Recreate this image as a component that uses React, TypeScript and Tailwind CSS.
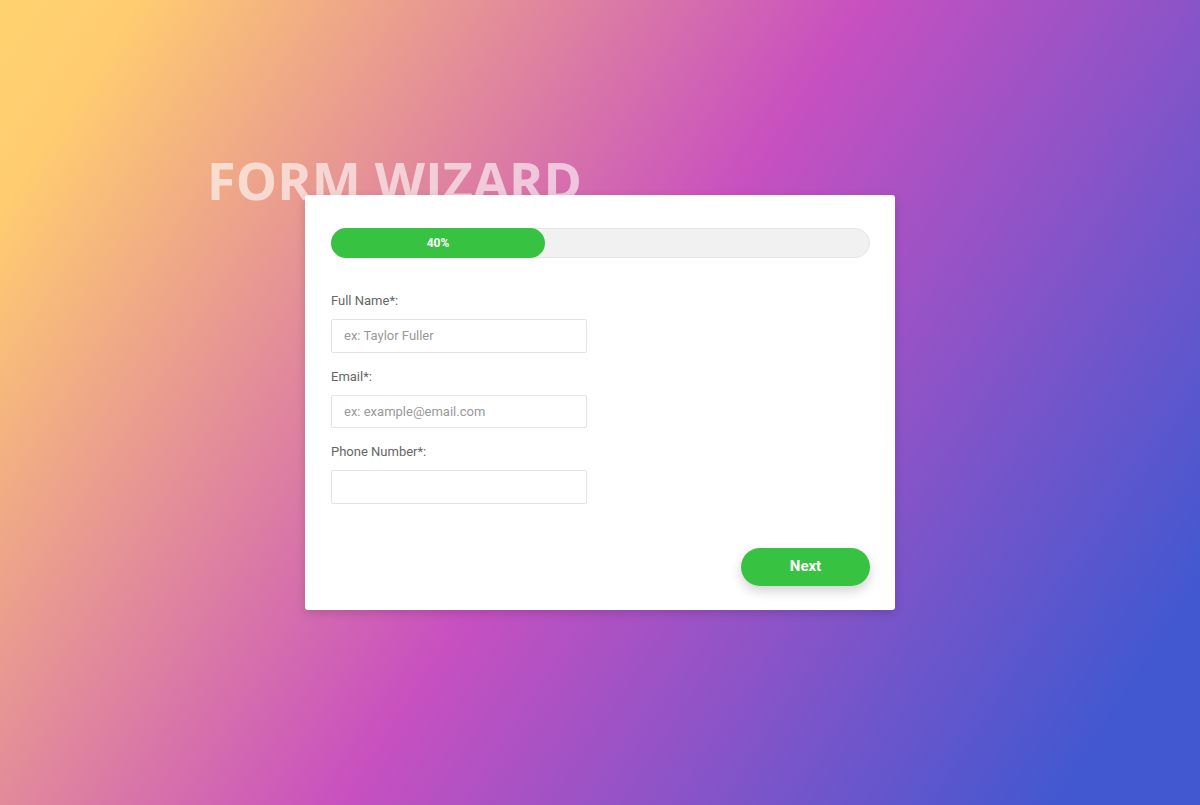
import React from "react";

export default function App() {
  const fields = [
    { label: "Full Name*:", placeholder: "ex: Taylor Fuller" },
    { label: "Email*:", placeholder: "ex: example@email.com" },
    { label: "Phone Number*:", placeholder: "" },
  ];
  return (
    <div
      className="w-[1200px] h-[805px] overflow-hidden bg-[linear-gradient(123deg,#ffd36f_0%,#ffcc70_8%,#c850c0_50%,#4158d0_92%,#4158d0_100%)] font-['Roboto',sans-serif]"
    >
      <div className="pt-[149px] pl-[207px]">
        <h1 className="text-[52px] leading-[62px] font-bold tracking-[0.2px] text-white/60 font-['Open_Sans',sans-serif]">
          FORM WIZARD
        </h1>
      </div>
      <div className="relative ml-[305px] -mt-[16px] w-[590px] h-[415px] bg-white rounded-[3px] shadow-[0_3px_10px_rgba(0,0,0,0.15)] pt-[33px] pl-[26px] pr-[25px] flex flex-col">
        <div className="h-[30px] w-full rounded-full bg-[#f1f1f1] border border-[#e6e6e6] flex overflow-visible">
          <div className="h-[30px] -mt-px -ml-px w-[214px] rounded-full bg-[#37c241] flex items-center justify-center text-white text-[12px] font-bold">
            40%
          </div>
        </div>
        <div className="flex flex-col mt-[33px]">
          {fields.map((f, i) => (
            <div key={i} className={i > 0 ? "mt-[14px]" : ""}>
              <label className="block text-[13px] leading-[20px] text-[#666]">{f.label}</label>
              <div className="mt-[8px] w-[256px] h-[33.5px] border border-[#e3e3e3] rounded-[2px] flex items-center px-[12px] text-[13px] text-[#999]">
                {f.placeholder}
              </div>
            </div>
          ))}
        </div>
        <div className="flex justify-end mt-[44px]">
          <button className="w-[129px] h-[38px] rounded-full bg-[#37c241] text-white text-[15px] font-bold shadow-[0_5px_12px_rgba(0,0,0,0.18)]">
            Next
          </button>
        </div>
      </div>
    </div>
  );
}
